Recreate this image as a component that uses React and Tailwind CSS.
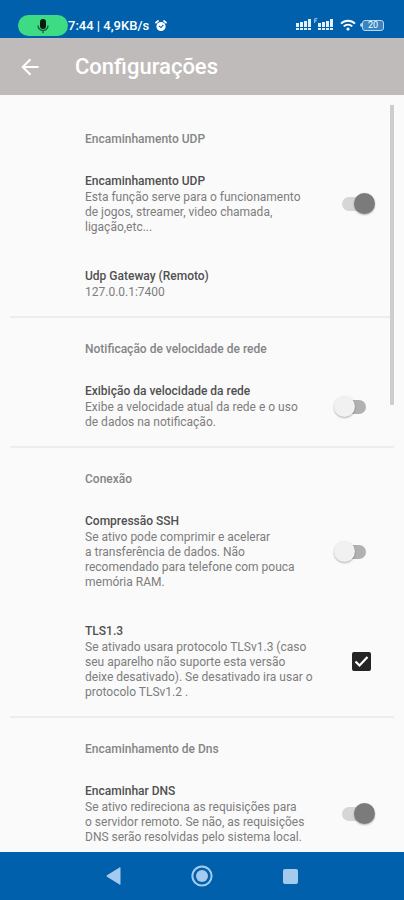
const sections = [
  {
    title: 'Encaminhamento UDP',
    items: [
      {
        id: 'udp',
        kind: 'switch',
        title: 'Encaminhamento UDP',
        text: 'Esta função serve para o funcionamento de\u00a0jogos, streamer, video chamada, ligação,etc...',
        on: true,
      },
      { id: 'gateway', kind: 'action', title: 'Udp Gateway (Remoto)', text: '127.0.0.1:7400' },
    ],
  },
  {
    title: 'Notificação de velocidade de rede',
    items: [
      {
        id: 'speed',
        kind: 'switch',
        title: 'Exibição da velocidade da rede',
        text: 'Exibe a velocidade atual da rede e o uso de\u00a0dados na notificação.',
        on: false,
      },
    ],
  },
  {
    title: 'Conexão',
    items: [
      {
        id: 'ssh',
        kind: 'switch',
        title: 'Compressão SSH',
        text: 'Se ativo pode comprimir e acelerar a\u00a0transferência de dados. Não recomendado\u00a0para telefone com pouca memória\u00a0RAM.',
        on: false,
      },
      {
        id: 'tls',
        kind: 'check',
        title: 'TLS1.3',
        text: 'Se ativado usara protocolo TLSv1.3 (caso seu aparelho não suporte esta versão deixe\u00a0desativado). Se desativado ira usar o protocolo TLSv1.2 .',
        on: true,
      },
    ],
  },
  {
    title: 'Encaminhamento de Dns',
    items: [
      {
        id: 'dns',
        kind: 'switch',
        title: 'Encaminhar DNS',
        text: 'Se ativo redireciona as requisições para o\u00a0servidor remoto. Se não, as requisições DNS serão resolvidas pelo sistema local.',
        on: true,
      },
    ],
  },
];

function Signal() {
  return (
    <svg viewBox="0 0 16 12" className="h-3 w-4" fill="#e3effa" aria-hidden="true">
      <rect x="0" y="4" width="3" height="4" />
      <rect x="4" y="3" width="3" height="5" />
      <rect x="8" y="2" width="3" height="6" />
      <rect x="12" y="0" width="3" height="8" />
      <rect x="0" y="9" width="3" height="2" />
      <rect x="4" y="9" width="3" height="2" />
      <rect x="8" y="9" width="3" height="2" />
      <rect x="12" y="9" width="3" height="2" />
    </svg>
  );
}

function StatusBar() {
  return (
    <div className="flex h-[38px] shrink-0 items-end justify-between bg-[#0060ac] pr-5 pl-[18px]">
      <div className="flex items-center pb-0.5 text-white">
        <span className="flex h-[21px] w-[50px] items-center justify-center rounded-full bg-[#3ddc84]">
          <svg viewBox="0 0 12 14" className="h-[14px] w-3" aria-hidden="true">
            <rect x="3" y="0" width="6" height="10" rx="3" fill="#0b1a10" />
            <path d="M1 6.5a5 5 0 0 0 10 0M6 11.5V14" fill="none" stroke="#1c5a38" strokeWidth="1.4" />
          </svg>
        </span>
        <span className="text-[13px] leading-4 font-medium whitespace-nowrap">7:44 | 4,9KB/s</span>
        <svg viewBox="0 0 12 12" className="ml-[6px] h-3 w-3" aria-hidden="true">
          <circle cx="6" cy="6.5" r="4.6" fill="#fff" />
          <path d="M1 2.6 3 1M11 2.6 9 1" stroke="#fff" strokeWidth="1.8" strokeLinecap="round" />
          <path d="m4 6 2 1.6L8.3 4.8" fill="none" stroke="#0060ac" strokeWidth="1.1" />
        </svg>
      </div>
      <div className="flex items-center pb-[6px]">
        <Signal />
        <svg viewBox="0 0 4 6" className="mb-2 ml-0.5 h-[6px] w-1" aria-hidden="true">
          <path d="M3.5.7H.7V5M.7 2.8h2" fill="none" stroke="#a9cbe9" strokeWidth="1" />
        </svg>
        <Signal />
        <svg viewBox="0 0 16 12" className="ml-[6px] h-3 w-4" fill="none" stroke="#fff" strokeWidth="1.8" aria-hidden="true">
          <path d="M1 4.6a10 10 0 0 1 14 0M3.7 7.4a6 6 0 0 1 8.6 0" />
          <circle cx="8" cy="10" r="1.6" fill="#fff" stroke="none" />
        </svg>
        <span className="ml-1 flex items-center">
          <span className="h-1 w-0.5 rounded-l-sm bg-[#b9d6ef]" />
          <span className="flex h-[11px] w-[22px] items-center justify-center rounded-[3px] border border-[#b9d6ef] bg-[#3a84c2] text-[9px] leading-[9px] text-white">
            20
          </span>
        </span>
      </div>
    </div>
  );
}

function Control({ item }) {
  if (item.kind === 'switch') {
    return (
      <input
        id={item.id}
        type="checkbox"
        role="switch"
        defaultChecked={item.on}
        className="relative h-[22px] w-[41px] shrink-0 appearance-none before:absolute before:top-1 before:left-2 before:h-[14px] before:w-6 before:rounded-full before:bg-[#b1b1b1] after:absolute after:top-0 after:left-0 after:size-[21px] after:rounded-full after:bg-[#f1f1f1] after:shadow-[0_1px_2px_rgba(0,0,0,0.3)] checked:before:bg-[#d6d6d6] checked:after:left-5 checked:after:bg-[#7b7b7b]"
      />
    );
  }
  if (item.kind === 'check') {
    return (
      <span className="relative flex w-[41px] shrink-0 justify-end pr-1">
        <input
          id={item.id}
          type="checkbox"
          defaultChecked={item.on}
          className="peer size-[19px] appearance-none rounded-[2px] border-2 border-[#242424] checked:bg-[#242424]"
        />
        <svg
          viewBox="0 0 19 19"
          className="pointer-events-none absolute top-0 right-1 hidden size-[19px] peer-checked:block"
          fill="none"
          stroke="#fff"
          strokeWidth="2.2"
          aria-hidden="true"
        >
          <path d="m3.5 9.5 4 4 8-8.5" />
        </svg>
      </span>
    );
  }
  return <span className="w-[41px] shrink-0" />;
}

function Item({ item }) {
  const Label = item.kind === 'action' ? 'div' : 'label';
  return (
    <li>
      <Label
        {...(item.kind === 'action' ? {} : { htmlFor: item.id })}
        className="flex items-center gap-3 pt-4 pr-[29px] pb-[17px] pl-[85px]"
      >
        <span className="flex min-w-0 flex-1 flex-col gap-px">
          <span className="text-xs leading-4 font-medium text-[#505050]">{item.title}</span>
          <span className="text-xs leading-[15px] text-[#7d7d7d]">{item.text}</span>
        </span>
        <Control item={item} />
      </Label>
    </li>
  );
}

export default function App() {
  return (
    <div className="flex h-screen flex-col overflow-hidden bg-[#fafafa] font-[Roboto,sans-serif]">
      <StatusBar />
      <header className="flex h-[57px] shrink-0 items-center bg-[#bfbbba] pl-5 text-white">
        <button type="button" aria-label="Voltar" className="flex size-5 items-center justify-center">
          <svg viewBox="0 0 18 18" className="size-[18px]" fill="none" stroke="currentColor" strokeWidth="2" aria-hidden="true">
            <path d="M17.5 9H2M9.5 1.2 1.7 9l7.8 7.8" />
          </svg>
        </button>
        <h1 className="ml-[35px] text-[22px] leading-7 font-medium">Configurações</h1>
      </header>

      <div className="relative min-h-0 flex-1">
        <main className="h-full overflow-y-auto pt-3 [scrollbar-width:none]">
          {sections.map((section, index) => (
            <section key={section.title}>
              {index > 0 && <hr className="mx-[10px] -my-px border-t-2 border-[#ededed]" />}
              <h2 className="pt-6 pb-[10px] pl-[85px] text-xs leading-4 font-medium text-[#858585]">
                {section.title}
              </h2>
              <ul>
                {section.items.map((item) => (
                  <Item key={item.id} item={item} />
                ))}
              </ul>
            </section>
          ))}
        </main>
        <div className="absolute top-[10px] right-[10px] h-[300px] w-1 bg-[#cdcdcd]" />
      </div>

      <nav className="flex h-12 shrink-0 items-center justify-center gap-16 bg-[#0060ac]">
        <button type="button" aria-label="Retroceder" className="flex size-6 items-center justify-center">
          <svg viewBox="0 0 24 24" className="size-6" fill="#a4cbee" aria-hidden="true">
            <path d="M18.5 4v16q0 1-1 .5L5 12.8q-1-.8 0-1.6l12.5-7.7q1-.5 1 .5z" />
          </svg>
        </button>
        <button type="button" aria-label="Início" className="flex size-6 items-center justify-center">
          <svg viewBox="0 0 24 24" className="size-6" aria-hidden="true">
            <circle cx="12" cy="12" r="9.6" fill="none" stroke="#a4cbee" strokeWidth="2" />
            <circle cx="12" cy="12" r="6" fill="#a4cbee" />
          </svg>
        </button>
        <button type="button" aria-label="Recentes" className="flex size-6 items-center justify-center">
          <span className="size-[15px] rounded-[2px] bg-[#a4cbee]" />
        </button>
      </nav>
    </div>
  );
}
